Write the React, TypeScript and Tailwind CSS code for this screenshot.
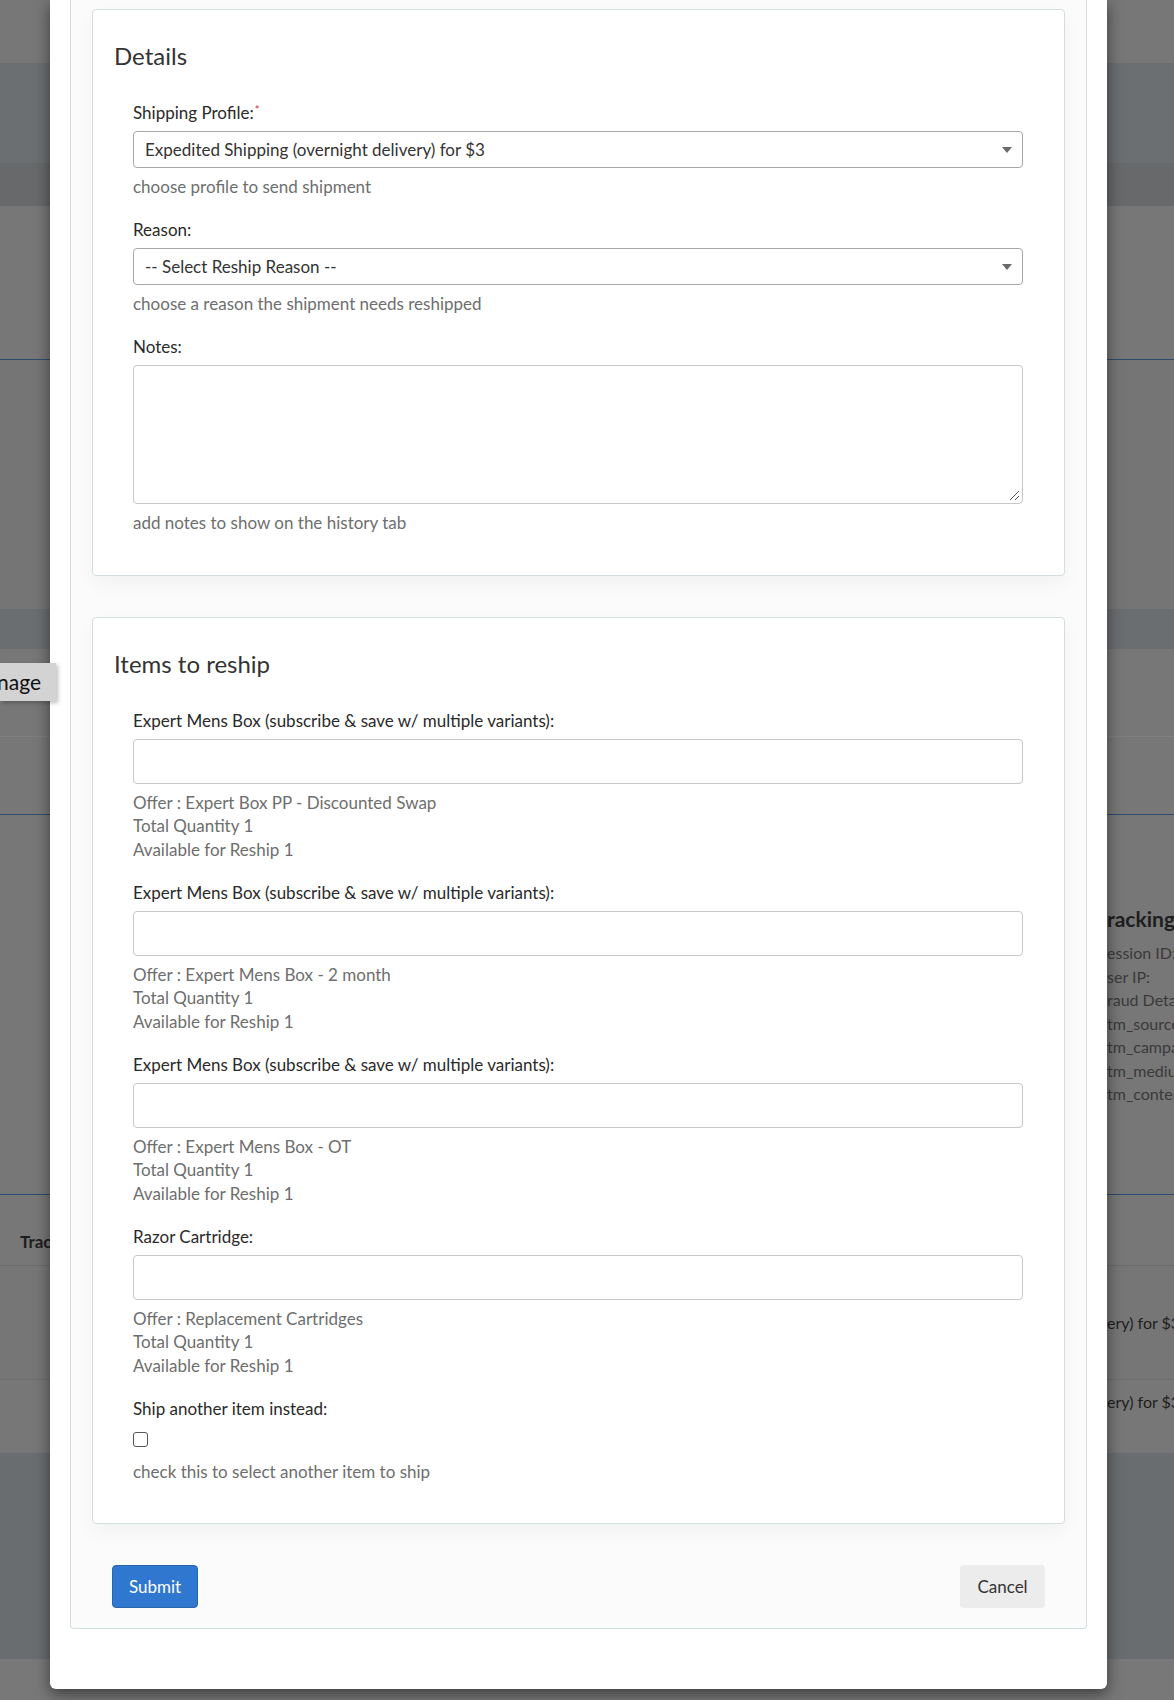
import React from "react";

const items = [
  { label: "Expert Mens Box (subscribe & save w/ multiple variants):", offer: "Expert Box PP - Discounted Swap" },
  { label: "Expert Mens Box (subscribe & save w/ multiple variants):", offer: "Expert Mens Box - 2 month" },
  { label: "Expert Mens Box (subscribe & save w/ multiple variants):", offer: "Expert Mens Box - OT" },
  { label: "Razor Cartridge:", offer: "Replacement Cartridges" },
];

function Arrow() {
  return (
    <svg width="10" height="6" viewBox="0 0 10 6" className="shrink-0">
      <path d="M0 0 L10 0 L5 6 Z" fill="#6b6b6b" />
    </svg>
  );
}

function FakeSelect({ text }: { text: string }) {
  return (
    <div className="flex h-[37px] items-center justify-between rounded-[4px] border border-[#a8a8a8] bg-white pl-[11px] pr-[10px] text-[17px] text-[#333]">
      <span>{text}</span>
      <Arrow />
    </div>
  );
}

function Label({ children }: { children: React.ReactNode }) {
  return <div className="mb-[7px] text-[17px] leading-[23px] text-[#2a2a2a]">{children}</div>;
}

function Help({ children }: { children: React.ReactNode }) {
  return <div className="mt-[7px] text-[17px] leading-[23px] text-[#6e6e6e]">{children}</div>;
}

function Backdrop() {
  return (
    <div className="flex h-[1700px] w-full flex-col">
      <div className="h-[63px] bg-[#777777]" />
      <div className="h-[100px] bg-[#6b6f71]" />
      <div className="h-[43px] bg-[#67696b]" />
      <div className="h-[154px] border-b border-[#2d4b70] bg-[#777777]" />
      <div className="h-[249px] bg-[#757575]" />
      <div className="h-[40px] bg-[#6b6e70]" />
      <div className="h-[88px] border-b border-[#7e7e7e] bg-[#777777]" />
      <div className="h-[78px] border-b border-[#2d4b70] bg-[#777777]" />
      <div className="flex h-[380px] justify-end border-b border-[#2d4b70] bg-[#777777] pt-[90px]">
        <div className="w-[67px] overflow-hidden">
          <div className="whitespace-nowrap text-[21px] font-bold leading-[28px] text-[#1e1e1e]">racking</div>
          <div className="mt-[8px] whitespace-nowrap text-[16px] leading-[23.5px] text-[#3a3a3a]">
            <div>ession ID:</div>
            <div>ser IP:</div>
            <div>raud Details</div>
            <div>tm_source</div>
            <div>tm_campaign</div>
            <div>tm_medium</div>
            <div>tm_content</div>
          </div>
        </div>
      </div>
      <div className="h-[71px] border-b border-[#6c6c6c] bg-[#777777] pt-[36px] pl-[20px]">
        <div className="w-[30px] overflow-hidden whitespace-nowrap text-[17px] font-bold leading-[22px] text-[#1e1e1e]">Trac</div>
      </div>
      <div className="flex h-[114px] justify-end border-b border-[#6c6c6c] bg-[#767676] pt-[46px]">
        <div className="w-[67px] overflow-hidden whitespace-nowrap text-[16px] leading-[22px] text-[#1e1e1e]">ery) for $3</div>
      </div>
      <div className="flex h-[73px] justify-end bg-[#777777] pt-[11px]">
        <div className="w-[67px] overflow-hidden whitespace-nowrap text-[16px] leading-[22px] text-[#1e1e1e]">ery) for $3</div>
      </div>
      <div className="h-[206px] bg-[#6a6d6f]" />
      <div className="flex-1 bg-[#787878]" />
    </div>
  );
}

export default function App() {
  return (
    <div className="relative h-[1700px] w-[1174px] overflow-hidden font-[Lato,sans-serif]">
      <Backdrop />
      <div className="absolute left-[50px] top-0 w-[1057px] rounded-b-[6px] bg-white pb-[60px] shadow-[0_5px_15px_rgba(0,0,0,0.5)]">
        <div className="mx-[20px] rounded-b-[4px] border border-t-0 border-[#d4dee0] bg-[#fbfbfb] px-[21px] pb-[20px] pt-[9px]">
          {/* Details card */}
          <div className="rounded-[4px] border border-[#d4dee0] bg-white px-[21px] pb-[20px] pt-[31px] shadow-[0_8px_18px_rgba(0,0,0,0.04)]">
            <h2 className="mb-[31px] text-[24px] leading-[29px] text-[#333]">Details</h2>
            <div className="pl-[19px] pr-[20px]">
              <div className="mb-[20px]">
                <Label>
                  Shipping Profile:<sup className="ml-[1px] text-[11px] text-[#c9302c]">*</sup>
                </Label>
                <FakeSelect text="Expedited Shipping (overnight delivery) for $3" />
                <Help>choose profile to send shipment</Help>
              </div>
              <div className="mb-[20px]">
                <Label>Reason:</Label>
                <FakeSelect text="-- Select Reship Reason --" />
                <Help>choose a reason the shipment needs reshipped</Help>
              </div>
              <div className="mb-[21px]">
                <Label>Notes:</Label>
                <div className="relative h-[139px] rounded-[4px] border border-[#c8c8c8] bg-white">
                  <svg width="11" height="11" viewBox="0 0 11 11" className="absolute bottom-[2px] right-[2px]">
                    <path d="M10 1 L1 10 M10 6 L6 10" stroke="#555" strokeWidth="1" />
                  </svg>
                </div>
                <Help>add notes to show on the history tab</Help>
              </div>
            </div>
          </div>

          {/* Items card */}
          <div className="mt-[41px] rounded-[4px] border border-[#d4dee0] bg-white px-[21px] pb-[20px] pt-[31px] shadow-[0_8px_18px_rgba(0,0,0,0.04)]">
            <h2 className="mb-[31px] text-[24px] leading-[29px] text-[#333]">Items to reship</h2>
            <div className="pl-[19px] pr-[20px]">
              {items.map((it, i) => (
                <div key={i} className="mb-[20px]">
                  <Label>{it.label}</Label>
                  <div className="h-[45px] rounded-[4px] border border-[#c8c8c8] bg-white" />
                  <div className="mt-[7px] text-[17px] leading-[23.33px] text-[#6e6e6e]">
                    <div>Offer : {it.offer}</div>
                    <div>Total Quantity 1</div>
                    <div>Available for Reship 1</div>
                  </div>
                </div>
              ))}
              <div className="mb-[20px]">
                <div className="text-[17px] leading-[23px] text-[#2a2a2a]">Ship another item instead:</div>
                <div className="mt-[8px] flex h-[24px] items-center">
                  <div className="h-[15px] w-[15px] rounded-[3px] border border-[#555] bg-white" />
                </div>
                <div className="mt-[8px] text-[17px] leading-[23px] text-[#6e6e6e]">check this to select another item to ship</div>
              </div>
            </div>
          </div>

          {/* Buttons */}
          <div className="mt-[41px] flex items-center justify-between px-[20px]">
            <button className="flex h-[43px] w-[86px] items-center justify-center rounded-[4px] border border-[#2a64ad] bg-[#3078cf] text-[17px] text-white">
              Submit
            </button>
            <button className="flex h-[43px] w-[85px] items-center justify-center rounded-[4px] bg-[#ececec] text-[17px] text-[#333]">
              Cancel
            </button>
          </div>
        </div>
      </div>
      {/* Floating side tab over the page */}
      <div className="absolute left-0 top-[663px] z-10 flex h-[38px] w-[56px] items-center justify-end overflow-hidden bg-[#d3d3d3] pr-[15px] shadow-[2px_2px_4px_rgba(0,0,0,0.25)]">
        <span className="whitespace-nowrap text-[21px] text-[#111]">Manage</span>
      </div>
    </div>
  );
}
